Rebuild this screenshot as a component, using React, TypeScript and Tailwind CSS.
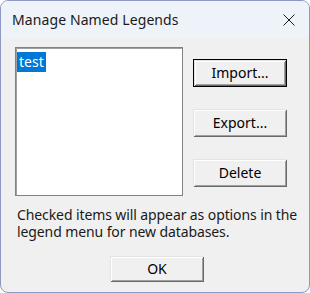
const bevel =
  "shadow-[inset_1px_1px_0_#e3e3e3,inset_-1px_-1px_0_#696969,inset_2px_2px_0_#ffffff,inset_-2px_-2px_0_#a0a0a0]"

function PushButton({ label, isDefault, className = "" }: { label: string; isDefault?: boolean; className?: string }) {
  return (
    <div className={`flex ${isDefault ? "border border-black" : ""} ${className}`}>
      <button
        className={`flex flex-1 items-center justify-center bg-[#f0f0f0] text-[14px] leading-none text-black ${bevel}`}
      >
        {label}
      </button>
    </div>
  )
}

export default function App() {
  return (
    <div
      className="flex h-[293px] w-[310px] flex-col overflow-hidden rounded-[8px] border border-[#8d99c2] bg-[#f0f0f0] text-black"
      style={{ fontFamily: '"Noto Sans", "Open Sans", sans-serif' }}
    >
      {/* title bar */}
      <div className="flex h-[37px] shrink-0 items-center justify-between bg-[#eef2f9] pl-[11px] pr-[14px]">
        <span className="whitespace-nowrap text-[14px] leading-none tracking-[0.1px] text-[#1a1a1a]">
          Manage Named Legends
        </span>
        <svg width="12" height="12" viewBox="0 0 12 12" className="mt-[1px]">
          <path d="M0.5 0.5 L11.5 11.5 M11.5 0.5 L0.5 11.5" stroke="#1a1a1a" strokeWidth="1" fill="none" />
        </svg>
      </div>

      <div className="flex flex-1 flex-col pl-[14px] pt-[9px]">
        <div className="flex gap-[10px]">
          <div className="h-[149px] w-[168px] border border-[#828282] bg-white p-[1px] shadow-[inset_1px_1px_0_#a0a0a0]">
            <span className="inline-block h-[20px] bg-[#0078d7] px-[2px] text-[14px] leading-[20px] text-white">
              test
            </span>
          </div>
          <div className="flex flex-col gap-[22px] pt-[12px]">
            <PushButton label="Import..." isDefault className="h-[28px] w-[94px]" />
            <PushButton label="Export..." className="h-[28px] w-[94px]" />
            <PushButton label="Delete" className="h-[28px] w-[94px]" />
          </div>
        </div>

        <div className="mt-[10px] flex flex-col pl-[2px] text-[14px] leading-[17px] tracking-[-0.1px] text-[#1a1a1a]">
          <span className="whitespace-nowrap">Checked items will appear as options in the</span>
          <span className="whitespace-nowrap">legend menu for new databases.</span>
        </div>

        <div className="mt-[16px] flex pl-[95px]">
          <PushButton label="OK" className="h-[26px] w-[94px]" />
        </div>
      </div>
    </div>
  )
}
